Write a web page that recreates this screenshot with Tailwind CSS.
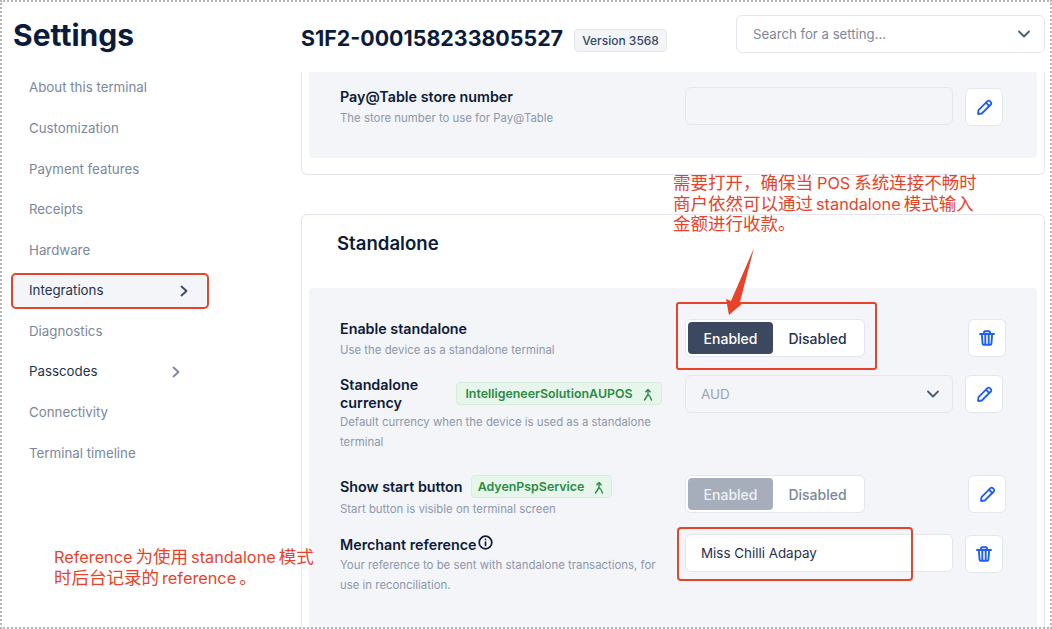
<!DOCTYPE html>
<html lang="en">
<head>
<meta charset="UTF-8">
<title>Settings</title>
<script src="https://cdn.jsdelivr.net/npm/@tailwindcss/browser@4"></script>
</head>
<body class="bg-white">
<div class="relative w-[1052px] h-[629px] overflow-hidden bg-white flex text-[#0d1b3a]" style="font-family: Inter, 'Noto Sans CJK SC', sans-serif;">

  <!-- sidebar -->
  <aside class="w-[301px] shrink-0 flex flex-col">
    <h1 class="pl-[13px] pt-[15px] h-[68px] text-[30px] leading-[40px] font-bold">Settings</h1>
    <nav class="flex flex-col text-[13.3px] text-[#7b879d]">
      <a class="h-[40.6px] pl-[29px] flex items-center">About this terminal</a>
      <a class="h-[40.6px] pl-[29px] flex items-center">Customization</a>
      <a class="h-[40.6px] pl-[29px] flex items-center">Payment features</a>
      <a class="h-[40.6px] pl-[29px] flex items-center">Receipts</a>
      <a class="h-[40.6px] pl-[29px] flex items-center">Hardware</a>
      <a class="h-[40.6px] flex items-center">
        <span class="ml-[13px] w-[193px] h-[31px] pl-[16px] pr-[17px] flex items-center justify-between bg-[#f3f5f9] rounded text-[#26324d]">Integrations
          <svg class="w-[10px] h-[12px]" viewBox="0 0 10 12" fill="none" stroke="#3a4763" stroke-width="1.8" stroke-linecap="round" stroke-linejoin="round"><path d="M2.500 1.500 7.500 6l-5 4.500"/></svg>
        </span>
      </a>
      <a class="h-[40.6px] pl-[29px] flex items-center">Diagnostics</a>
      <a class="h-[40.6px] pl-[29px] w-[181px] flex items-center justify-between text-[#26324d]">Passcodes
        <svg class="w-[10px] h-[12px]" viewBox="0 0 10 12" fill="none" stroke="#7b879d" stroke-width="1.8" stroke-linecap="round" stroke-linejoin="round"><path d="M2.500 1.500 7.500 6l-5 4.500"/></svg>
      </a>
      <a class="h-[40.6px] pl-[29px] flex items-center">Connectivity</a>
      <a class="h-[40.6px] pl-[29px] flex items-center">Terminal timeline</a>
    </nav>
  </aside>

  <!-- main column -->
  <main class="w-[744px] shrink-0 flex flex-col">
    <header class="h-[72px] shrink-0 flex items-start">
      <h2 class="mt-[24px] text-[21.4px] leading-[28px] font-bold whitespace-nowrap">S1F2-000158233805527</h2>
      <span class="mt-[29px] ml-[11px] w-[93px] h-[23px] flex items-center justify-center rounded bg-[#f3f5f9] border border-[#e3e6ee] text-[12px] font-medium text-[#3a4763]">Version 3568</span>
      <div class="mt-[15px] ml-auto w-[309px] h-[38px] pl-[16px] pr-[14px] flex items-center justify-between rounded-md border border-[#e3e6ee] text-[13.2px] text-[#7b879d]"><span class="pt-[1px]">Search for a setting...</span>
        <svg class="w-[12px] h-[8px]" viewBox="0 0 12 8" fill="none" stroke="#4d5a75" stroke-width="1.800" stroke-linecap="round" stroke-linejoin="round"><path d="M1 1.500 6 6.500l5-5"/></svg>
      </div>
    </header>

    <section class="h-[103px] shrink-0 px-[7px] pb-[15px] border-x border-b border-[#e3e6ee] rounded-b-md">
      <div class="h-[86px] bg-[#f3f5f9] rounded-b flex pl-[31px] pt-[15px]">
        <div class="w-[345px]">
          <div class="mt-[1px] text-[14.3px] leading-[18px] font-semibold">Pay@Table store number</div>
          <div class="mt-[2px] text-[11.4px] leading-[20px] text-[#8d97ab]">The store number to use for Pay@Table</div>
        </div>
        <div class="flex gap-[12px]">
          <div class="w-[268px] h-[38px] rounded-md border border-[#e3e6ee]"></div>
          <button class="mt-[1px] w-[38px] h-[38px] flex items-center justify-center rounded-md bg-white border border-[#e3e6ee]">
            <svg class="w-[17px] h-[17px]" viewBox="0 0 17 17" fill="none" stroke="#1f5ff0" stroke-width="1.800" stroke-linejoin="round" stroke-linecap="round"><path d="M2 15l.5-3.800L11.500 2.200a1.600 1.600 0 0 1 2.300 0l1 1a1.600 1.600 0 0 1 0 2.300L5.800 14.500 2 15Z"/><path d="M10 3.700l3.300 3.300"/></svg>
          </button>
        </div>
      </div>
    </section>

    <section class="mt-[39px] h-[500px] shrink-0 px-[7px] border border-[#e3e6ee] rounded-md">
      <h3 class="pl-[28px] pt-[16px] h-[73px] text-[18.6px] leading-[24px] font-semibold">Standalone</h3>
      <div class="bg-[#f3f5f9] rounded h-[400px] pl-[31px] pt-[31px] flex flex-col">

        <div class="flex h-[56px]">
          <div class="w-[345px]">
            <div class="mt-[1px] text-[14.3px] leading-[18px] font-semibold">Enable standalone</div>
            <div class="mt-[2px] text-[11.4px] leading-[20px] text-[#8d97ab]">Use the device as a standalone terminal</div>
          </div>
          <div class="w-[321px] flex justify-between items-start">
            <div class="w-[180px] h-[38px] p-[2px] flex items-center rounded-md bg-white border border-[#e3e6ee] text-[14px] font-medium">
              <span class="w-[85px] h-[32px] flex items-center justify-center rounded bg-[#3c4860] text-white">Enabled</span>
              <span class="flex-1 text-center text-[#26324d]">Disabled</span>
            </div>
            <button class="w-[38px] h-[38px] flex items-center justify-center rounded-md bg-white border border-[#e3e6ee]">
              <svg class="w-[16px] h-[16px]" viewBox="0 0 16 16" fill="none" stroke="#1f5ff0" stroke-width="1.900" stroke-linecap="round" stroke-linejoin="round"><path d="M1 4h14"/><path d="M5 4V2.200a1 1 0 0 1 1-1h4a1 1 0 0 1 1 1V4"/><path d="M2.800 4l.8 9.600a1.200 1.200 0 0 0 1.200 1.100h6.400a1.200 1.200 0 0 0 1.200-1.100L13.200 4"/><path d="M6.300 5v9M9.700 5v9"/></svg>
            </button>
          </div>
        </div>

        <div class="flex h-[100px]">
          <div class="w-[345px] pr-[23px]">
            <div class="mt-[1px] flex items-start justify-between">
              <div class="w-[100px] text-[14.3px] leading-[18px] font-semibold">Standalone currency</div>
              <span class="mt-[6px] w-[206px] h-[23px] pt-[2px] flex items-center justify-center gap-[10px] rounded bg-[#e7f6ea] border border-[#d5efdb] text-[12.4px] font-semibold text-[#2c8a45] whitespace-nowrap">IntelligeneerSolutionAUPOS
                <svg class="w-[10px] h-[13px]" viewBox="0 0 10 13" fill="none" stroke="#2c8a45" stroke-width="1.400" stroke-linecap="round" stroke-linejoin="round"><path d="M5 1.500V6.500L1.500 12M5 6.500c1.500 1 2.800 3 3.500 5.500M2.800 3.700 5 1.500l2.200 2.200"/></svg>
              </span>
            </div>
            <div class="w-[320px] text-[11.4px] leading-[20px] text-[#8d97ab]">Default currency when the device is used as a standalone terminal</div>
          </div>
          <div class="flex gap-[12px]">
            <div class="w-[268px] h-[38px] pl-[15px] pr-[13px] flex items-center justify-between rounded-md border border-[#e3e6ee] text-[13.5px] text-[#9aa3b5]">AUD
              <svg class="w-[12px] h-[8px]" viewBox="0 0 12 8" fill="none" stroke="#4d5a75" stroke-width="1.800" stroke-linecap="round" stroke-linejoin="round"><path d="M1 1.500 6 6.500l5-5"/></svg>
            </div>
            <button class="w-[38px] h-[38px] flex items-center justify-center rounded-md bg-white border border-[#e3e6ee]">
              <svg class="w-[17px] h-[17px]" viewBox="0 0 17 17" fill="none" stroke="#1f5ff0" stroke-width="1.800" stroke-linejoin="round" stroke-linecap="round"><path d="M2 15l.5-3.800L11.500 2.200a1.600 1.600 0 0 1 2.300 0l1 1a1.600 1.600 0 0 1 0 2.300L5.800 14.500 2 15Z"/><path d="M10 3.700l3.300 3.300"/></svg>
            </button>
          </div>
        </div>

        <div class="flex h-[59px]">
          <div class="w-[345px]">
            <div class="flex items-center gap-[8px]">
              <div class="text-[14.3px] leading-[18px] font-semibold">Show start button</div>
              <span class="w-[141px] h-[23px] pt-[2px] flex items-center justify-center gap-[10px] rounded bg-[#e7f6ea] border border-[#d5efdb] text-[12.4px] font-semibold text-[#2c8a45]">AdyenPspService
                <svg class="w-[10px] h-[13px]" viewBox="0 0 10 13" fill="none" stroke="#2c8a45" stroke-width="1.400" stroke-linecap="round" stroke-linejoin="round"><path d="M5 1.500V6.500L1.500 12M5 6.500c1.500 1 2.800 3 3.500 5.500M2.800 3.700 5 1.500l2.200 2.200"/></svg>
              </span>
            </div>
            <div class="mt-[1px] text-[11.4px] leading-[20px] text-[#8d97ab]">Start button is visible on terminal screen</div>
          </div>
          <div class="w-[321px] flex justify-between items-start">
            <div class="w-[180px] h-[38px] p-[2px] flex items-center rounded-md bg-white border border-[#e3e6ee] text-[14px] font-medium">
              <span class="w-[85px] h-[32px] flex items-center justify-center rounded bg-[#a6aebc] text-[#eef0f4]">Enabled</span>
              <span class="flex-1 text-center text-[#7b879d]">Disabled</span>
            </div>
            <button class="w-[38px] h-[38px] flex items-center justify-center rounded-md bg-white border border-[#e3e6ee]">
              <svg class="w-[17px] h-[17px]" viewBox="0 0 17 17" fill="none" stroke="#1f5ff0" stroke-width="1.800" stroke-linejoin="round" stroke-linecap="round"><path d="M2 15l.5-3.800L11.500 2.200a1.600 1.600 0 0 1 2.300 0l1 1a1.600 1.600 0 0 1 0 2.300L5.800 14.500 2 15Z"/><path d="M10 3.700l3.300 3.300"/></svg>
            </button>
          </div>
        </div>

        <div class="flex">
          <div class="w-[345px] pr-[22px]">
            <div class="mt-[2px] flex items-start gap-[1px]">
              <div class="text-[14.3px] leading-[18px] font-semibold">Merchant reference</div>
              <svg class="w-[15px] h-[15px] mt-[-1px]" viewBox="0 0 15 15" fill="none" stroke="#0d1b3a" stroke-width="1.700" stroke-linecap="round"><circle cx="7.500" cy="7.500" r="6.300"/><path d="M7.500 7v3.500M7.500 4.400v.1"/></svg>
            </div>
            <div class="mt-[1px] text-[11.4px] leading-[20px] text-[#8d97ab]">Your reference to be sent with standalone transactions, for use in reconciliation.</div>
          </div>
          <div class="flex gap-[12px]">
            <div class="w-[268px] h-[38px] pl-[15px] flex items-center rounded-md bg-white border border-[#e3e6ee] text-[13.4px] text-[#26324d]">Miss Chilli Adapay</div>
            <button class="mt-[1px] w-[38px] h-[38px] flex items-center justify-center rounded-md bg-white border border-[#e3e6ee]">
              <svg class="w-[16px] h-[16px]" viewBox="0 0 16 16" fill="none" stroke="#1f5ff0" stroke-width="1.900" stroke-linecap="round" stroke-linejoin="round"><path d="M1 4h14"/><path d="M5 4V2.200a1 1 0 0 1 1-1h4a1 1 0 0 1 1 1V4"/><path d="M2.800 4l.8 9.600a1.200 1.200 0 0 0 1.200 1.100h6.400a1.200 1.200 0 0 0 1.200-1.100L13.200 4"/><path d="M6.300 5v9M9.700 5v9"/></svg>
            </button>
          </div>
        </div>

      </div>
    </section>
  </main>

  <!-- red annotations laid over the screenshot -->
  <div class="absolute left-[11px] top-[273px] w-[198px] h-[36px] border-[2.500px] border-[#e8432a] rounded-[5px]"></div>
  <div class="absolute left-[676px] top-[302px] w-[201px] h-[68px] border-[2.500px] border-[#e8432a] rounded-[3px]"></div>
  <div class="absolute left-[677px] top-[527px] w-[236px] h-[54px] border-[2.500px] border-[#e8432a] rounded-[4px]"></div>
  <svg class="absolute left-[724px] top-[246px] w-[34px] h-[70px]" viewBox="0 0 34 70" fill="#e8432a"><path d="M30 2 16 56 19 57 5 69 2 53 7 55Z"/></svg>
  <p class="absolute left-[673px] top-[173px] w-[330px] text-[17.5px] leading-[20.500px] text-[#e8432a]">需要打开，确保当<span class="mx-[4px] text-[16.3px]">POS</span>系统连接不畅时<br>商户依然可以通过<span class="mx-[3px] text-[16.3px]">standalone</span>模式输入<br>金额进行收款。</p>
  <p class="absolute left-[54px] top-[547px] w-[280px] text-[17.5px] leading-[20.500px] text-[#e8432a]"><span class="mr-[3px] text-[16.3px]">Reference</span>为使用<span class="mx-[3px] text-[16.3px]">standalone</span>模式<br>时后台记录的<span class="mx-[3px] text-[16.3px]">reference</span>。</p>

  <!-- dotted capture outline -->
  <div class="absolute inset-0 border-2 border-dotted border-[#b5b5b5] pointer-events-none"></div>
</div>
</body>
</html>
